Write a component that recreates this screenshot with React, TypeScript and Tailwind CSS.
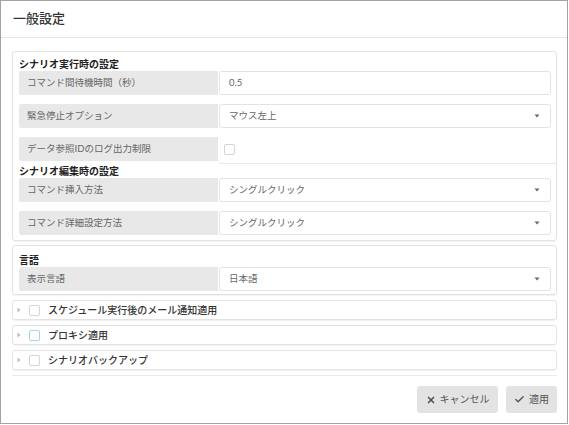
import { X, Check } from 'lucide-react';

function Caret() {
  return (
    <svg width="6" height="4" viewBox="0 0 6 4" className="shrink-0">
      <path d="M0.5 0.5 L5.5 0.5 L3 3.5 Z" fill="#666" />
    </svg>
  );
}

function Label({ text }: { text: string }) {
  return (
    <div className="w-[199px] shrink-0 bg-[#e8e8e8] rounded-l-[2px] flex items-center pl-[8px] text-[9.5px] text-[#666]">
      {text}
    </div>
  );
}

function InputRow({ label, value, select, last }: { label: string; value: string; select?: boolean; last?: boolean }) {
  return (
    <div className={`flex h-[24px] gap-[1px] ${last ? '' : 'mb-[9px]'}`}>
      <Label text={label} />
      <div className="flex-1 border border-[#e3e3e3] rounded-[3px] flex items-center justify-between pl-[9px] pr-[10px] text-[9.5px] text-[#666]">
        <span>{value}</span>
        {select && <Caret />}
      </div>
    </div>
  );
}

function Accordion({ title, focus }: { title: string; focus?: boolean }) {
  return (
    <div className="h-[20px] mb-[5px] border border-[#e3e3e3] rounded-[3px] shadow-[0_1px_1px_rgba(0,0,0,0.06)] flex items-center pl-[4px]">
      <svg width="4" height="6" viewBox="0 0 4 6" className="shrink-0">
        <path d="M0.5 0.5 L3.5 3 L0.5 5.5 Z" fill="#bbb" />
      </svg>
      <div
        className={`ml-[8px] w-[11px] h-[11px] rounded-[2px] border ${focus ? 'border-[#a9d2ea]' : 'border-[#d4d4d4]'} bg-white`}
      />
      <span className="ml-[8px] text-[10px] font-medium text-[#333]">{title}</span>
    </div>
  );
}

export default function App() {
  return (
    <div className="w-[568px] h-[424px] border border-[#a3a3a3] bg-white flex flex-col font-['Lato','Noto_Sans_CJK_JP',sans-serif]">
      <div className="h-[37px] shrink-0 border-b border-[#e6e6e6] px-[12px] flex items-center text-[13px] font-medium text-[#333]">
        一般設定
      </div>

      <div className="px-[11px] pt-[13px] pr-[10px]">
        <div className="border border-[#e2e2e2] rounded-[3px] shadow-[0_1px_1px_rgba(0,0,0,0.05)] pl-[6px] pr-[5px] pb-[5px]">
          <div className="h-[19px] pt-[5px] leading-[14px] text-[10px] font-bold text-[#222]">シナリオ実行時の設定</div>
          <InputRow label="コマンド間待機時間（秒）" value="0.5" />
          <InputRow label="緊急停止オプション" value="マウス左上" select />
          <div className="flex h-[24px] gap-[1px]">
            <Label text="データ参照IDのログ出力制限" />
            <div className="flex-1 flex items-center pl-[5px]">
              <div className="w-[11px] h-[11px] rounded-[2px] border border-[#d4d4d4]" />
            </div>
          </div>
          <div className="flex mt-[2px]">
            <div className="w-[200px] shrink-0" />
            <div className="flex-1 h-[1px] bg-[#e8e8e8] -mr-[5px]" />
          </div>
          <div className="h-[14px] leading-[14px] text-[10px] font-bold text-[#222]">シナリオ編集時の設定</div>
          <InputRow label="コマンド挿入方法" value="シングルクリック" select />
          <InputRow label="コマンド詳細設定方法" value="シングルクリック" select last />
        </div>

        <div className="mt-[4px] border border-[#e2e2e2] rounded-[3px] shadow-[0_1px_1px_rgba(0,0,0,0.05)] pl-[6px] pr-[5px] pb-[3px]">
          <div className="h-[21px] pt-[7px] leading-[14px] text-[10px] font-bold text-[#222]">言語</div>
          <InputRow label="表示言語" value="日本語" select last />
        </div>

        <div className="mt-[5px]">
          <Accordion title="スケジュール実行後のメール通知適用" />
          <Accordion title="プロキシ適用" focus />
          <Accordion title="シナリオバックアップ" />
        </div>
      </div>

      <div className="mt-auto mx-[11px] mr-[10px] border-t border-[#ececec] pt-[10px] pb-[10px] flex justify-end gap-[8px]">
        <button className="w-[81px] h-[27px] bg-[#e3e3e3] rounded-[3px] flex items-center justify-center gap-[4px] text-[10px] text-[#555]">
          <X size={10} strokeWidth={4} color="#555" />
          <span>キャンセル</span>
        </button>
        <button className="w-[51px] h-[27px] bg-[#e3e3e3] rounded-[3px] flex items-center justify-center gap-[4px] text-[10px] text-[#555]">
          <Check size={11} strokeWidth={3} color="#555" />
          <span>適用</span>
        </button>
      </div>
    </div>
  );
}
